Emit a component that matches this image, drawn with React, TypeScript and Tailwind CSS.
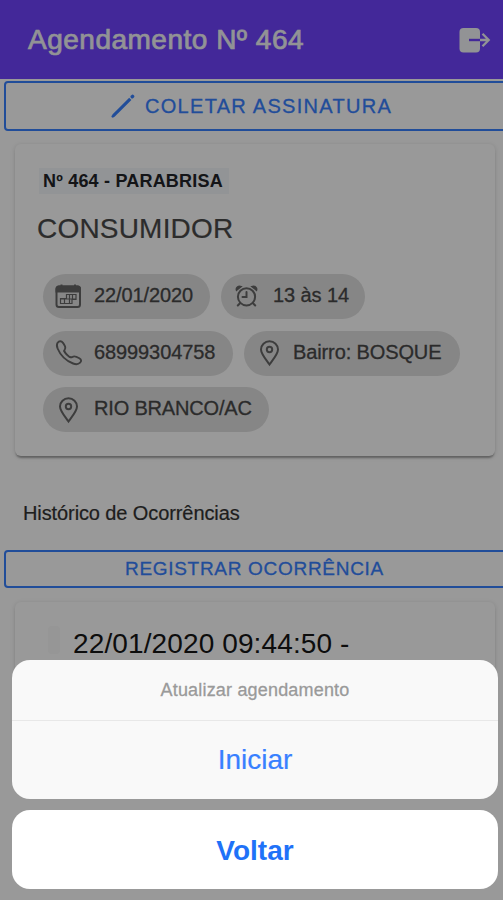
import type { ReactNode } from "react";

interface ChipProps {
  icon: ReactNode;
  label: string;
  className: string;
  textClassName: string;
}

function Chip({ icon, label, className, textClassName }: ChipProps) {
  return (
    <div className={`h-[45px] rounded-full bg-[#e0e0e0] flex items-center pl-3 text-xl text-[#484848] ${className}`}>
      <span className="w-7 flex-shrink-0 flex justify-center text-[#666]">{icon}</span>
      <span className={`pb-[3px] whitespace-nowrap [-webkit-text-stroke:0.3px] ${textClassName}`}>{label}</span>
    </div>
  );
}

function CalendarIcon() {
  return (
    <svg className="w-7 h-7" viewBox="0 0 28 28" fill="none" stroke="currentColor" strokeWidth="2">
      <rect x="1.5" y="3.5" width="23.5" height="20.5" rx="2.5" />
      <path d="M1.5 8.500V6A2.500 2.500 0 0 1 4 3.500h18.500A2.500 2.500 0 0 1 25 6v2.500z" fill="currentColor" />
      <path d="M6.500 1.500v4M20 1.500v4" />
      <path d="M11.500 11.500H21v5h-4v4H5.500v-5h6zM14.500 11.500v9M17.500 11.500v5M5.500 16h15.500M9.500 16v4.500" strokeWidth="1.200" />
    </svg>
  );
}

function AlarmIcon() {
  return (
    <svg className="w-7 h-7" viewBox="0 0 28 28" fill="none" stroke="currentColor" strokeWidth="2" strokeLinecap="round">
      <circle cx="13.500" cy="13.800" r="8.600" />
      <path d="M13.500 9v5h-4" />
      <path d="M3.500 7.200C2.600 4.600 5.200 2.600 8.200 3.600zM23.500 7.200c.9-2.600-1.700-4.600-4.700-3.600z" fill="currentColor" strokeWidth="1.500" />
      <path d="M7 20.200 4.800 22.500M20 20.200l2.200 2.300" />
    </svg>
  );
}

function PhoneIcon() {
  return (
    <svg className="w-7 h-7" viewBox="0 0 28 28" fill="none" stroke="currentColor" strokeWidth="1.900" strokeLinejoin="round">
      <path d="M2.600 3.800C4 1.800 6.400 1.700 8 3.800c1.900 2.500 2.900 4.500 2 6-.9 1.400-1.100 2.200-.1 3.600 1.200 1.700 2.600 3.100 4.300 4.300 1.300.9 2.100.7 3.400.1 1.600-.9 4.200 0 6.700 1.500 2.200 1.400 2.300 2.900.8 4.400-1.800 1.800-4.100 2-7 .8C11 21.800 5.300 16 2.600 9.500c-1-2.400-1-4.200 0-5.700z" />
      <path d="m8.700 11.300 1.200 2.100M14.200 17.700l2 1" strokeWidth="1.400" />
    </svg>
  );
}

function PinIcon() {
  return (
    <svg className="w-7 h-7" viewBox="0 0 28 28" fill="none" stroke="currentColor" strokeWidth="2">
      <path d="M13.500 25.500C10 20.600 5 15 5 10.500a8.500 8.200 0 0 1 17 0c0 4.500-5 10.100-8.500 15z" />
      <circle cx="13.500" cy="10.500" r="2.700" />
    </svg>
  );
}

function ExitIcon() {
  return (
    <svg className="w-8 h-7" viewBox="0 0 32 28" fill="none">
      <rect x="0.500" y="2" width="20.500" height="24.500" rx="4" fill="#f4f5f8" />
      <path d="M10 14h11" stroke="#7044ff" strokeWidth="2.400" />
      <path d="M21 14h8.500M23.500 7.800 29.700 14l-6.200 6.200" stroke="#f4f5f8" strokeWidth="2.300" />
    </svg>
  );
}

function PencilIcon() {
  return (
    <svg className="w-6 h-6" viewBox="0 0 24 24" fill="none" stroke="currentColor" strokeLinecap="round">
      <path d="M2.500 21.700 19.300 4.900" strokeWidth="3.100" strokeLinecap="butt" />
      <path d="m1.800 22.400 1-1" strokeWidth="2.600" />
      <path d="m21.200 2.800.4-.4" strokeWidth="3.400" />
    </svg>
  );
}

function AppointmentCard() {
  return (
    <div className="mt-[13px] ml-[15px] w-[480px] h-[312px] rounded-md bg-white pt-6 shadow-[0_3px_2px_-1px_rgba(0,0,0,0.3),0_1px_5px_0_rgba(0,0,0,0.14)]">
      <div className="ml-6 w-[190px] h-[26px] bg-[#f4f7fa] pl-1 leading-[27px] text-lg font-bold text-[#222428] whitespace-nowrap tracking-[0.2px]">
        Nº 464 - PARABRISA
      </div>
      <h2 className="mt-[18px] ml-[22px] text-[28px] leading-[34px] text-[#4a4a4a] tracking-[0.2px] [-webkit-text-stroke:0.2px]">CONSUMIDOR</h2>
      <div className="mt-[28px] ml-[28px] flex flex-wrap gap-x-[11px] gap-y-[11.500px]">
        <Chip icon={<CalendarIcon />} label="22/01/2020" className="w-[167px]" textClassName="ml-[11px] tracking-[-0.1px]" />
        <Chip icon={<AlarmIcon />} label="13 às 14" className="w-[144px]" textClassName="ml-[12px] tracking-[-0.1px]" />
        <Chip icon={<PhoneIcon />} label="68999304758" className="w-[190px]" textClassName="ml-[11px] tracking-[-0.1px]" />
        <Chip icon={<PinIcon />} label="Bairro: BOSQUE" className="w-[216px]" textClassName="ml-[9px] tracking-[-0.12px]" />
        <Chip icon={<PinIcon />} label="RIO BRANCO/AC" className="w-[226px]" textClassName="ml-[11px] tracking-[-0.18px]" />
      </div>
    </div>
  );
}

function ActionSheet() {
  return (
    <div className="absolute inset-0 bg-black/40 flex flex-col justify-end pl-3 pr-[5px] pb-[11px] text-center">
      <div className="h-[139px] rounded-[18px] bg-[#f9f9f9] overflow-hidden">
        <div className="h-[61px] border-b border-[#e8e8e8] leading-[61px] text-lg text-[#9a9a9a] tracking-[0.18px] [-webkit-text-stroke:0.3px]">
          Atualizar agendamento
        </div>
        <button className="block w-full h-[78px] text-[28px] text-[#3880ff] [-webkit-text-stroke:0.2px]">Iniciar</button>
      </div>
      <button className="mt-[11px] h-[79px] rounded-[18px] bg-white pt-0.5 text-[28px] font-bold text-[#1f72f8]">Voltar</button>
    </div>
  );
}

export default function App() {
  return (
    <div className="relative w-[503px] h-[900px] overflow-hidden bg-white font-['Liberation_Sans',Arial,sans-serif]">
      {/* Header */}
      <header className="h-[79px] bg-[#7044ff] flex items-center justify-between pl-[28px] pr-3">
        <h1 className="pt-px text-[28px] text-[#f4f5f8] tracking-[0.5px] [-webkit-text-stroke:0.7px]">Agendamento Nº 464</h1>
        <ExitIcon />
      </header>

      <button className="mt-[2px] ml-1 w-[507px] h-[50px] rounded border-2 border-[#3880ff] flex items-center pl-[105px] text-xl text-[#3880ff]">
        <PencilIcon />
        <span className="ml-2.5 whitespace-nowrap tracking-[1.3px] [-webkit-text-stroke:0.3px]">COLETAR ASSINATURA</span>
      </button>

      <AppointmentCard />

      <p className="mt-[43px] ml-[23px] text-xl leading-[28px] text-[#333] tracking-[-0.1px] [-webkit-text-stroke:0.2px]">
        Histórico de Ocorrências
      </p>

      <button className="mt-[23px] ml-1 w-[507px] h-[38px] rounded border-2 border-[#3880ff] flex items-center pl-[119px] text-[19px] text-[#3880ff]">
        <span className="whitespace-nowrap tracking-[0.7px] [-webkit-text-stroke:0.3px]">REGISTRAR OCORRÊNCIA</span>
      </button>

      {/* Occurrence entry, continues under the sheet */}
      <div className="mt-[14px] ml-[15px] w-[480px] h-[180px] rounded-md bg-white pt-[24px] pl-[33px] flex items-start shadow-[0_3px_2px_-1px_rgba(0,0,0,0.3),0_1px_5px_0_rgba(0,0,0,0.14)]">
        <span className="w-3 h-7 rounded-sm bg-[#fafafa]" />
        <span className="ml-[13px] text-[28px] leading-9 text-[#161616] tracking-[0.12px] whitespace-nowrap">
          22/01/2020 09:44:50 -
        </span>
      </div>

      <ActionSheet />
    </div>
  );
}
